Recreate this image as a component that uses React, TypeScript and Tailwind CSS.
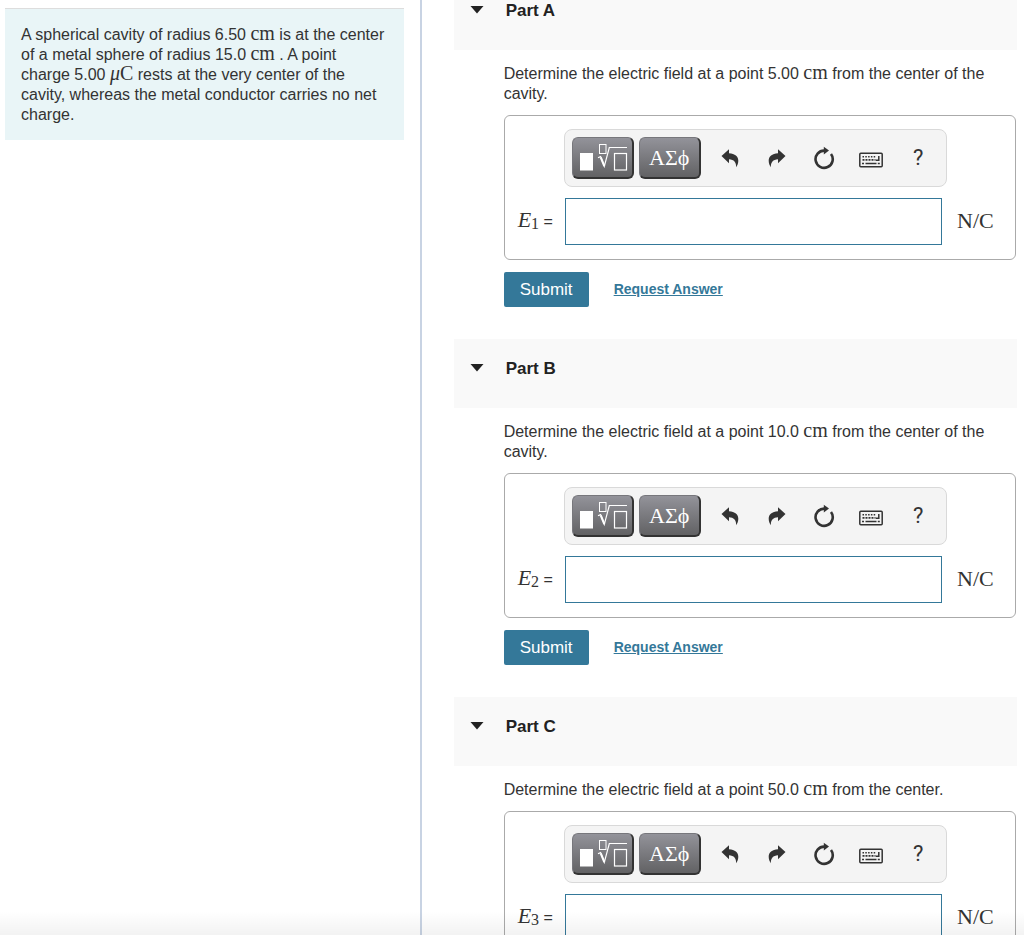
import { ReactNode } from 'react';

interface Part {
    id: string;
    title: string;
    index: number;
    question: ReactNode;
}

const Unit = ({ children }: { children: ReactNode }) => (
    <span className="font-['Liberation_Serif',serif] text-xl leading-4">{children}</span>
);

const parts: Part[] = [
    {
        id: 'a',
        title: 'Part A',
        index: 1,
        question: <>Determine the electric field at a point 5.00 <Unit>cm</Unit> from the center of the cavity.</>,
    },
    {
        id: 'b',
        title: 'Part B',
        index: 2,
        question: <>Determine the electric field at a point 10.0 <Unit>cm</Unit> from the center of the cavity.</>,
    },
    {
        id: 'c',
        title: 'Part C',
        index: 3,
        question: <>Determine the electric field at a point 50.0 <Unit>cm</Unit> from the center.</>,
    },
];

const TemplatesIcon = () => (
    <svg width="50" height="30" viewBox="0 0 50 30" fill="none" stroke="white" aria-hidden="true">
        <rect x="1" y="10" width="13" height="17.5" fill="white" stroke="none" />
        <rect x="20.5" y="1.5" width="6.500" height="9" strokeWidth="1" />
        <path d="M19 14.8l2.6-1.2L25.3 23.4 30.3 4.5H48" strokeWidth="1.2" />
        <path d="M21.8 14.5l3.5 8.5" strokeWidth="2" />
        <rect x="35.5" y="10.5" width="12" height="16.5" strokeWidth="1.2" />
    </svg>
);

const UndoIcon = () => (
    <svg width="18" height="20" viewBox="0 0 18 20" fill="currentColor" aria-hidden="true">
        <path d="M.5 8L8 1.2v4c6 .4 9.3 3.2 9.3 7.600 0 2.600-.8 4.600-2.200 6.400C15.400 14.500 13 11.500 8 11.300v4z" />
    </svg>
);

const RedoIcon = () => (
    <svg width="18" height="20" viewBox="0 0 18 20" fill="currentColor" aria-hidden="true">
        <path d="M17.500 8L10 1.200v4C4 5.600.7 8.400.7 12.800c0 2.600.8 4.600 2.200 6.400C2.600 14.500 5 11.500 10 11.300v4z" />
    </svg>
);

const ResetIcon = () => (
    <svg width="22" height="24" viewBox="0 0 22 24" fill="none" aria-hidden="true">
        <path d="M11.5 4.600A8.600 8.600 0 1 0 18 8" stroke="currentColor" strokeWidth="2.6" />
        <path d="M10.800.8l5.200 3.600-5.200 4.100z" fill="currentColor" />
    </svg>
);

const KeyboardIcon = () => (
    <svg width="24" height="16" viewBox="0 0 24 16" fill="none" stroke="currentColor" aria-hidden="true">
        <rect x=".8" y="1.3" width="22.4" height="13.4" rx="1" strokeWidth="1.5" />
        <path d="M3.5 4.8h14" strokeWidth="1.6" strokeDasharray="1.5 1.3" />
        <path d="M3.5 7.9h13" strokeWidth="1.6" strokeDasharray="2 1" />
        <path d="M3 11.5h2M6.5 11.5h11M18.8 11.5h2" strokeWidth="1.6" />
        <path d="M19.8 4v4.2h-3" strokeWidth="1.5" />
    </svg>
);

const darkButton =
    'flex h-[42px] w-[62px] items-center justify-center rounded-md border border-r-2 border-b-2 border-[#333] border-t-[#77777c] border-l-[#77777c] bg-linear-to-b from-[#93939a] to-[#626264] text-white';

const ToolButton = ({ label, children }: { label: string; children: ReactNode }) => (
    <button type="button" aria-label={label} className="flex h-[42px] w-[47px] shrink-0 items-center justify-center text-[#333]">
        {children}
    </button>
);

const Toolbar = () => (
    <div className="flex h-[58px] items-center rounded-lg border border-[#d9d9d9] bg-[#f4f4f4] pl-[7px]">
        <div className="flex shrink-0 gap-[5px] pr-1.5">
            <button type="button" aria-label="Templates" className={`${darkButton} pl-1`}>
                <TemplatesIcon />
            </button>
            <button type="button" className={`${darkButton} font-['Liberation_Serif',serif] text-[22px]`}>
                ΑΣϕ
            </button>
        </div>
        <ToolButton label="Undo"><UndoIcon /></ToolButton>
        <ToolButton label="Redo"><RedoIcon /></ToolButton>
        <ToolButton label="Reset"><ResetIcon /></ToolButton>
        <ToolButton label="Keyboard shortcuts">
            <span className="pt-1"><KeyboardIcon /></span>
        </ToolButton>
        <ToolButton label="Help">
            <span className="font-[Roboto,sans-serif] text-[22px]">?</span>
        </ToolButton>
    </div>
);

const PartSection = ({ part }: { part: Part }) => (
    <section className="pb-8">
        <header className="flex h-[69px] items-start bg-[#f9f9f9] pt-[18px] pl-4">
            <button type="button" className="flex items-center text-[17px] leading-6 font-bold text-[#222]">
                <svg width="14" height="10" viewBox="0 0 14 10" fill="currentColor" aria-hidden="true" className="mr-[22px]">
                    <path d="M.5 0h13L7 7.5z" />
                </svg>
                {part.title}
            </button>
        </header>

        <div className="pt-3.5 pl-[50px]">
            <p>{part.question}</p>

            <form className="mt-[11px]" onSubmit={(e) => e.preventDefault()}>
                <div className="mr-px grid grid-cols-[46px_minmax(0,1fr)_55px] items-center gap-y-[11px] rounded-md border border-[#aaa] pt-[13px] pr-[13px] pb-3.5 pl-[13px]">
                    <div className="col-start-2">
                        <Toolbar />
                    </div>
                    <label htmlFor={`answer-${part.id}`} className="col-start-1 whitespace-nowrap">
                        <span className="font-['Liberation_Serif',serif] text-[22px] leading-5">
                            <i>E</i>
                            <sub className="-bottom-0.5 text-base">{part.index}</sub>
                        </span>{' '}
                        =
                    </label>
                    <div className="pr-[5px] pl-px">
                        <input
                            id={`answer-${part.id}`}
                            type="text"
                            className="block h-[47px] w-full border border-[#347899] bg-white px-2 outline-none"
                        />
                    </div>
                    <span className="pb-0.5 pl-2.5 font-['Liberation_Serif',serif] text-[22px] leading-5">N/C</span>
                </div>

                <div className="mt-3 flex items-center">
                    <button type="submit" className="h-[35px] w-[85px] rounded-xs bg-[#347899] text-[17px] text-white">
                        Submit
                    </button>
                    <a href="#" className="ml-[25px] pb-0.5 text-sm font-bold text-[#347899] underline">
                        Request Answer
                    </a>
                </div>
            </form>
        </div>
    </section>
);

export default function App() {
    return (
        <div className="relative grid h-screen grid-cols-[7fr_10fr] overflow-hidden bg-white font-['Liberation_Sans',Arial,sans-serif] text-base leading-5 text-[#333]">
            <aside className="border-r-2 border-[#c8d3e3] pt-2 pr-4 pl-[5px]">
                <p className="border-t border-[#ddd] bg-[#e9f5f7] px-4 pt-4 pb-[15px]">
                    A spherical cavity of radius 6.50 <Unit>cm</Unit> is at the center of a metal sphere of radius
                    15.0 <Unit>cm</Unit> . A point charge 5.00 <Unit><i>μ</i>C</Unit> rests at the very center of
                    the cavity, whereas the metal conductor carries no net charge.
                </p>
            </aside>

            <main className="min-h-0 overflow-hidden pr-[7px] pl-8">
                {/* scrolled slightly past the top of Part A */}
                <div className="-mt-[19px]">
                    {parts.map((part) => (
                        <PartSection key={part.id} part={part} />
                    ))}
                </div>
            </main>

            <div className="pointer-events-none absolute inset-x-0 bottom-0 h-6 bg-linear-to-b from-transparent to-black/5" />
        </div>
    );
}
